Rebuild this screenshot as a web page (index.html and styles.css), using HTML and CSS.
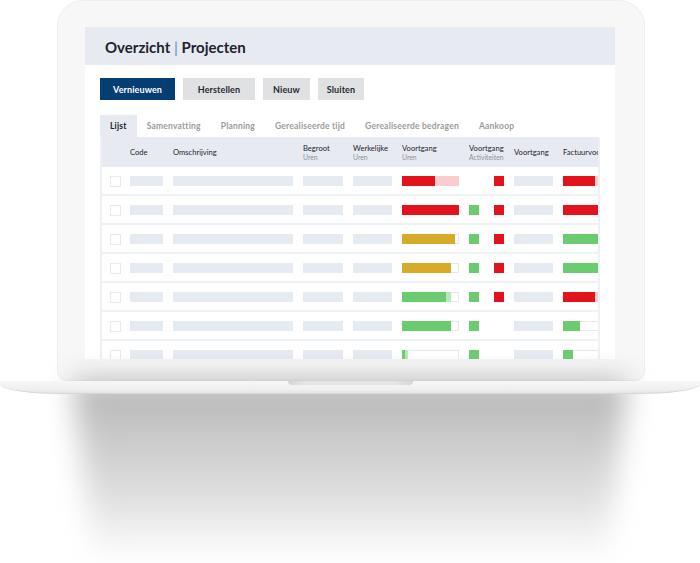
FILE: index.html
```html
<!DOCTYPE html>
<html lang="nl">
<head>
<meta charset="utf-8">
<title>Overzicht | Projecten</title>
<link rel="stylesheet" href="styles.css">
</head>
<body>
<div class="device">
  <div class="lid">
    <div class="screen">
      <div class="titlebar">
        <h1 class="title">Overzicht <span class="sep">|</span> Projecten</h1>
      </div>
      <div class="toolbar">
        <button class="btn btn-primary">Vernieuwen</button>
        <button class="btn btn-herstellen">Herstellen</button>
        <button class="btn btn-nieuw">Nieuw</button>
        <button class="btn btn-sluiten">Sluiten</button>
      </div>
      <div class="tabs">
        <span class="tab active">Lijst</span>
        <span class="tab">Samenvatting</span>
        <span class="tab">Planning</span>
        <span class="tab">Gerealiseerde tijd</span>
        <span class="tab">Gerealiseerde bedragen</span>
        <span class="tab">Aankoop</span>
      </div>
      <div class="table">
        <div class="grid thead">
          <span></span>
          <span class="th">Code</span>
          <span class="th">Omschrijving</span>
          <span class="th">Begroot<small>Uren</small></span>
          <span class="th">Werkelijke<small>Uren</small></span>
          <span class="th">Voortgang<small>Uren</small></span>
          <span class="th">Voortgang<small>Activiteiten</small></span>
          <span class="th">Voortgang</span>
          <span class="th">Factuurvoortgang</span>
        </div>

        <div class="grid row">
          <span class="cb"></span><span class="ph"></span><span class="ph"></span><span class="ph"></span><span class="ph"></span>
          <span class="prog"><span class="fill red" style="width:33px"></span><span class="fill pink" style="width:24px"></span></span>
          <span class="act"><span class="sq"></span><span class="sq red"></span></span>
          <span class="ph"></span>
          <span class="prog"><span class="fill red" style="width:32px"></span><span class="fill pink" style="width:28px"></span></span>
        </div>

        <div class="grid row">
          <span class="cb"></span><span class="ph"></span><span class="ph"></span><span class="ph"></span><span class="ph"></span>
          <span class="prog"><span class="fill red" style="width:57px"></span></span>
          <span class="act"><span class="sq green"></span><span class="sq red"></span></span>
          <span class="ph"></span>
          <span class="prog"><span class="fill red" style="width:60px"></span></span>
        </div>

        <div class="grid row">
          <span class="cb"></span><span class="ph"></span><span class="ph"></span><span class="ph"></span><span class="ph"></span>
          <span class="prog"><span class="fill gold" style="width:53px"></span></span>
          <span class="act"><span class="sq green"></span><span class="sq red"></span></span>
          <span class="ph"></span>
          <span class="prog"><span class="fill green" style="width:60px"></span></span>
        </div>

        <div class="grid row">
          <span class="cb"></span><span class="ph"></span><span class="ph"></span><span class="ph"></span><span class="ph"></span>
          <span class="prog"><span class="fill gold" style="width:49px"></span></span>
          <span class="act"><span class="sq green"></span><span class="sq red"></span></span>
          <span class="ph"></span>
          <span class="prog"><span class="fill green" style="width:60px"></span></span>
        </div>

        <div class="grid row">
          <span class="cb"></span><span class="ph"></span><span class="ph"></span><span class="ph"></span><span class="ph"></span>
          <span class="prog"><span class="fill green" style="width:44px"></span><span class="fill lgreen" style="width:5px"></span></span>
          <span class="act"><span class="sq green"></span><span class="sq red"></span></span>
          <span class="ph"></span>
          <span class="prog"><span class="fill red" style="width:32px"></span><span class="fill pink" style="width:28px"></span></span>
        </div>

        <div class="grid row">
          <span class="cb"></span><span class="ph"></span><span class="ph"></span><span class="ph"></span><span class="ph"></span>
          <span class="prog"><span class="fill green" style="width:49px"></span></span>
          <span class="act"><span class="sq green"></span><span class="sq"></span></span>
          <span class="ph"></span>
          <span class="prog"><span class="fill green" style="width:17px"></span></span>
        </div>

        <div class="grid row">
          <span class="cb"></span><span class="ph"></span><span class="ph"></span><span class="ph"></span><span class="ph"></span>
          <span class="prog"><span class="fill green" style="width:3px"></span><span class="fill lgreen" style="width:3px"></span></span>
          <span class="act"><span class="sq green"></span><span class="sq"></span></span>
          <span class="ph"></span>
          <span class="prog"><span class="fill green" style="width:10px"></span></span>
        </div>
      </div>
    </div>
  </div>
  <div class="base"><div class="notch"></div></div>
  <div class="shadow"><div class="shadow-shape"></div></div>
</div>
</body>
</html>
```

FILE: styles.css
```css
* {
  box-sizing: border-box;
  margin: 0;
  padding: 0;
}

html, body {
  width: 700px;
  height: 563px;
  background: #ffffff;
  overflow: hidden;
}

body {
  font-family: "Lato", "Liberation Sans", sans-serif;
}

.device {
  width: 700px;
}

/* ---------- laptop lid ---------- */
.lid {
  margin-left: 57px;
  width: 588px;
  height: 381px;
  background: #f7f7f7;
  border: 1px solid #eeeeee;
  border-radius: 26px 26px 10px 10px;
  padding: 26px 29px 0 27px;
}

.screen {
  height: 332px;
  background: #ffffff;
  overflow: hidden;
}

/* ---------- title bar ---------- */
.titlebar {
  height: 38px;
  background: #e7ebf1;
  display: flex;
  align-items: center;
  padding-left: 20px;
}

.title {
  font-size: 15px;
  font-weight: 700;
  color: #1d2330;
  padding-top: 2px;
}

.sep {
  color: #7ea3c8;
}

/* ---------- buttons ---------- */
.toolbar {
  display: flex;
  gap: 8px;
  margin: 13px 0 0 15px;
}

.btn {
  height: 22px;
  border: none;
  font-family: inherit;
  font-size: 9px;
  font-weight: 700;
  background: #dfe1e3;
  color: #262a30;
  letter-spacing: 0.1px;
}

.btn-primary {
  width: 75px;
  background: #053e73;
  color: #ffffff;
}

.btn-herstellen { width: 72px; }
.btn-nieuw { width: 47px; }
.btn-sluiten { width: 46px; }

/* ---------- tabs ---------- */
.tabs {
  display: flex;
  height: 22px;
  margin: 15px 0 0 15px;
}

.tab {
  padding: 0 10px;
  line-height: 22px;
  font-size: 8.5px;
  font-weight: 700;
  color: #9b9b9b;
  letter-spacing: 0.2px;
}

.tab.active {
  background: #e7ebf1;
  color: #1d2330;
}

/* ---------- table ---------- */
.table {
  margin-left: 15px;
  width: 500px;
  overflow: hidden;
  border-left: 2px solid #edf0f4;
  border-right: 2px solid #edf0f4;
}

.grid {
  display: grid;
  grid-template-columns: 10px 33px 120px 40px 39px 57px 35px 39px 60px;
  column-gap: 10px;
  padding-left: 8px;
  width: max-content;
  min-width: 100%;
}

.thead {
  height: 30px;
  background: #e7ebf1;
  align-items: center;
}

.th {
  font-size: 7.6px;
  line-height: 9px;
  color: #1d2330;
  white-space: nowrap;
}

.th small {
  display: block;
  font-size: 6.8px;
  line-height: 8px;
  color: #8b9099;
}

.row {
  height: 29px;
  padding-top: 9px;
  border-bottom: 2px solid #eef1f5;
  align-items: start;
}

.ph {
  height: 10px;
  background: #e6eaf1;
}

.cb {
  width: 11px;
  height: 11px;
  margin-top: -0.5px;
  background: #ffffff;
  border: 1.5px solid #e6eaf0;
}

.prog {
  height: 10px;
  display: flex;
  background: #ffffff;
  box-shadow: inset 0 0 0 1px #e6eaf0;
}

.fill {
  height: 10px;
  flex: none;
}

.act {
  display: flex;
  gap: 15px;
}

.sq {
  width: 10px;
  height: 10px;
}

.red { background: #e3131e; }
.pink { background: #f9cdd0; }
.gold { background: #d8aa29; }
.green { background: #6bcb6f; }
.lgreen { background: #b7e6b7; }

/* ---------- base ---------- */
.base {
  position: relative;
  z-index: 1;
  height: 13px;
  display: flex;
  justify-content: center;
  background: linear-gradient(#f7f7f7, #efeff0 70%, #e4e4e7);
  border-bottom: 1.5px solid #d6d6db;
  border-radius: 0 0 60px 60px / 0 0 10px 10px;
}

.notch {
  width: 125px;
  height: 4px;
  background: linear-gradient(to right, #d4d4d6, #e6e6e7 15%, #e6e6e7 85%, #d4d4d6);
  border-radius: 0 0 6px 6px;
}

/* ---------- shadow ---------- */
.shadow {
  margin: -14px 72px 0;
  height: 182px;
  filter: blur(14px);
}

.shadow-shape {
  height: 100%;
  background: linear-gradient(#b3b3b3, #c9c9c9 30%, #e0e0e0 65%, rgba(255, 255, 255, 0));
  clip-path: polygon(0 0, 100% 0, 96% 100%, 4% 100%);
}
```
